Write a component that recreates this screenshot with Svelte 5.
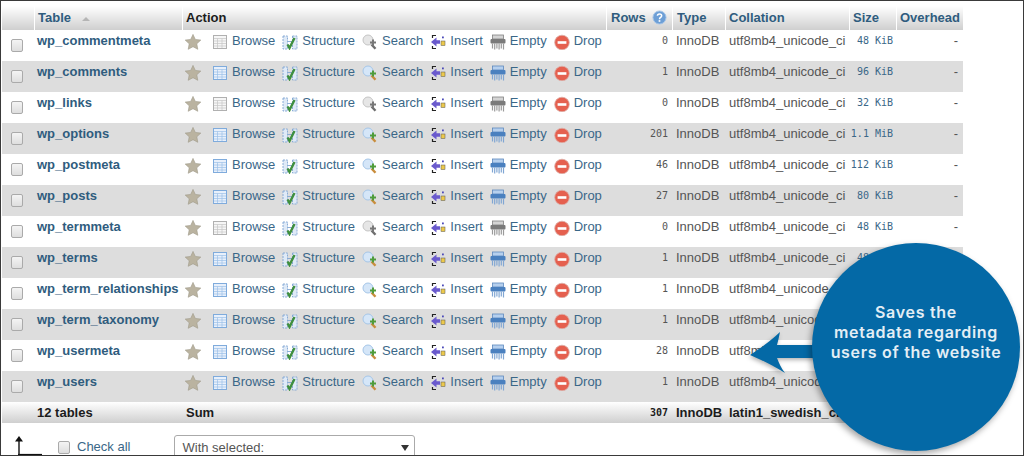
<script>
  const tables = [
    ['wp_commentmeta', 0, '48', 'KiB'],
    ['wp_comments', 1, '96', 'KiB'],
    ['wp_links', 0, '32', 'KiB'],
    ['wp_options', 201, '1.1', 'MiB'],
    ['wp_postmeta', 46, '112', 'KiB'],
    ['wp_posts', 27, '80', 'KiB'],
    ['wp_termmeta', 0, '48', 'KiB'],
    ['wp_terms', 1, '48', 'KiB'],
    ['wp_term_relationships', 1, '48', 'KiB'],
    ['wp_term_taxonomy', 1, '48', 'KiB'],
    ['wp_usermeta', 28, '48', 'KiB'],
    ['wp_users', 1, '48', 'KiB'],
  ];
</script>

{#snippet star()}
  <svg class="ico" viewBox="0 0 16 16">
    <path d="M8 .4l2.3 5 5.5.7-4 3.700 1 5.500L8 12.700l-4.800 2.600 1-5.500-4-3.700 5.500-.7z" fill="#bab3a0" stroke="#a09a8a" stroke-width=".6"></path>
  </svg>
{/snippet}

{#snippet browse(on)}
  <svg class="ico" viewBox="0 0 16 16">
    <rect x="1.500" y="1.500" width="13" height="13" fill={on ? '#e8f0fb' : '#f6f6f6'} stroke={on ? '#7fabdc' : '#b0b0b0'}></rect>
    <path d="M2 4.500h12M2 7h12M2 9.500h12M2 12h12M5.500 4.500V14M10 4.500V14" stroke={on ? '#9cc0e8' : '#c6c6c6'} stroke-width=".7" fill="none"></path>
  </svg>
{/snippet}

{#snippet structure()}
  <svg class="ico" viewBox="0 0 16 16">
    <path d="M1 2h4.500v13H1zM10.500 2H15v13h-4.500z" fill="#dfeaf7" stroke="#7fa5d3" stroke-width=".9" stroke-dasharray="2 1"></path>
    <path d="M6 7.500h4" stroke="#7fa5d3" stroke-width=".9"></path>
    <path d="M5.500 10.500L7.500 14 12.500 4" fill="none" stroke="#3f8f3f" stroke-width="2.400"></path>
  </svg>
{/snippet}

{#snippet search(on)}
  <svg class="ico" viewBox="0 0 16 16">
    <circle cx="6" cy="6" r="5" fill={on ? '#d5e6f8' : '#e6e6e6'} stroke={on ? '#a5c6e8' : '#c4c4c4'}></circle>
    <path d="M9.500 10.500l4 4.300" stroke={on ? '#c98d3c' : '#6e6e6e'} stroke-width="2.400"></path>
    <path d="M11 5.500v6M8 8.500h6" stroke={on ? '#4f9c3a' : '#777'} stroke-width="2"></path>
  </svg>
{/snippet}

{#snippet insert()}
  <svg class="ico" viewBox="0 0 16 16">
    <path d="M6 1.500H2.500v2.500M2.500 12v2.500H6" fill="none" stroke="#222" stroke-width="1.200"></path>
    <path d="M1 8l5.500-4.500v2.700h3.500v3.600H6.500v2.700z" fill="#6a5acd"></path>
    <rect x="11" y="7" width="4" height="4.500" fill="#ecc94b" stroke="#555" stroke-width=".5"></rect>
    <rect x="12" y="2.500" width="1.800" height="1.800" fill="#4a49b8"></rect>
  </svg>
{/snippet}

{#snippet empty(on)}
  <svg class="ico" viewBox="0 0 16 16">
    <rect x="2.500" y="1" width="11" height="4" fill={on ? '#b6d0ee' : '#d4d4d4'} stroke={on ? '#5c88bd' : '#808080'} stroke-width=".8"></rect>
    <rect x=".5" y="5" width="15" height="4.500" rx="1" fill={on ? '#4a80bf' : '#7a7a7a'}></rect>
    <path d="M2.500 9.500v5M4.700 9.500v6M6.900 9.500v5M9.100 9.500v6M11.300 9.500v5M13.500 9.500v6" stroke={on ? '#80a6d3' : '#9a9a9a'} stroke-width="1.200"></path>
  </svg>
{/snippet}

{#snippet drop()}
  <svg class="ico" viewBox="0 0 16 16">
    <circle cx="8" cy="8.500" r="7.300" fill="#e5604f" stroke="#dcb0a9" stroke-width=".8"></circle>
    <rect x="3.600" y="7.200" width="8.800" height="2.600" fill="#fff"></rect>
  </svg>
{/snippet}

<div class="frame">
  <table class="tables">
    <colgroup>
      <col class="c-check" /><col class="c-name" /><col class="c-action" /><col class="c-rows" />
      <col class="c-type" /><col class="c-coll" /><col class="c-size" /><col class="c-over" />
    </colgroup>
    <thead>
      <tr>
        <th></th>
        <th class="blue tight">Table <span class="sort"></span></th>
        <th class="tight">Action</th>
        <th class="blue">
          Rows
          <svg class="help" viewBox="0 0 16 16">
            <circle cx="8" cy="8" r="7" fill="#6d9fd6" stroke="#a9c6e8"></circle>
            <path d="M5.800 6.200C5.800 3.600 10.300 3.600 10.300 6.200 10.300 8 8 7.900 8 9.800" fill="none" stroke="#fff" stroke-width="1.600"></path>
            <rect x="7.100" y="10.800" width="1.800" height="1.800" fill="#fff"></rect>
          </svg>
        </th>
        <th class="blue">Type</th>
        <th class="blue tight">Collation</th>
        <th class="blue tight">Size</th>
        <th class="blue tight">Overhead</th>
      </tr>
    </thead>
    <tbody>
      {#each tables as [name, rows, size, unit]}
        <tr>
          <td><input class="check" type="checkbox" /></td>
          <td class="name">{name}</td>
          <td>
            <div class="actions">
              <span class="fav">{@render star()}</span>
              <span class="act">{@render browse(rows > 0)}Browse</span>
              <span class="act">{@render structure()}Structure</span>
              <span class="act">{@render search(rows > 0)}Search</span>
              <span class="act">{@render insert()}Insert</span>
              <span class="act">{@render empty(rows > 0)}Empty</span>
              <span class="act">{@render drop()}Drop</span>
            </div>
          </td>
          <td class="num">{rows}</td>
          <td>InnoDB</td>
          <td>utf8mb4_unicode_ci</td>
          <td class="num size">{size} {unit}</td>
          <td class="dash">-</td>
        </tr>
      {/each}
    </tbody>
    <tfoot>
      <tr>
        <th></th>
        <th class="tight">12 tables</th>
        <th>Sum</th>
        <th class="num">307</th>
        <th>InnoDB</th>
        <th>latin1_swedish_ci</th>
        <th></th>
        <th></th>
      </tr>
    </tfoot>
  </table>

  <div class="bulk">
    <svg class="corner" viewBox="0 0 28 20">
      <path d="M5 20V5" stroke="#111" stroke-width="1.400" fill="none"></path>
      <path d="M1 6.500L5 1l4 5.500z" fill="#111"></path>
      <path d="M4 19.500h24" stroke="#111" stroke-width="1.200" fill="none"></path>
    </svg>
    <input class="check" type="checkbox" />
    <span class="all">Check all</span>
    <div class="select">
      <span>With selected:</span>
      <span class="caret"></span>
    </div>
  </div>

  <svg class="pointer" viewBox="0 0 70 42">
    <path d="M0 23C12 15 22 8 30 0 29 5 28 9 27 13H70V26H27C29 31 31 36 35 41 24 34 12 28 0 23z" fill="#0469a6"></path>
  </svg>
  <div class="callout">
    <p>Saves the<br />metadata regarding<br />users of the website</p>
  </div>
</div>

<style>
  :global(body) {
    margin: 0;
    background: #fff;
  }

  .frame {
    position: relative;
    box-sizing: border-box;
    width: 1024px;
    height: 456px;
    overflow: hidden;
    border: 1px solid #3a3a3a;
    padding: 5px 0 0 1px;
    font-family: "Liberation Sans", Arial, sans-serif;
    font-size: 13px;
    color: #555;
  }

  .tables {
    table-layout: fixed;
    width: 961px;
    border-collapse: separate;
    border-spacing: 0;
  }

  .c-check { width: 32px; }
  .c-name { width: 148px; }
  .c-action { width: 424px; }
  .c-rows { width: 66px; }
  .c-type { width: 53px; }
  .c-coll { width: 124px; }
  .c-size { width: 47px; }
  .c-over { width: 67px; }

  th {
    box-sizing: border-box;
    height: 24px;
    padding: 0 4px 2px;
    text-align: left;
    font-weight: bold;
    white-space: nowrap;
    color: #1c1c1c;
    background: linear-gradient(#fff, #cfcfcf);
    border-left: 1px solid #fff;
  }

  th:first-child {
    border-left: 0;
  }

  th.blue {
    color: #2f5c7e;
  }

  th.tight {
    padding-left: 3px;
  }

  tfoot th {
    height: 21px;
    padding-bottom: 1px;
    border-left: 0;
    background: linear-gradient(#fff, #cfcfcf);
  }

  td {
    box-sizing: border-box;
    height: 31px;
    padding: 3px 4px 0;
    vertical-align: top;
    white-space: nowrap;
    overflow: hidden;
  }

  tbody tr:nth-child(even) td {
    background: #ddd;
  }

  td .check {
    margin: 6px 0 0 5px;
  }

  .check {
    appearance: none;
    box-sizing: border-box;
    display: block;
    flex: none;
    width: 12px;
    height: 13px;
    margin: 6px 0 0;
    border: 1px solid #aaa;
    border-radius: 2px;
    background: linear-gradient(#f4f4f4, #dedede);
  }

  .name {
    padding-left: 3px;
    font-weight: bold;
    color: #2f5c7e;
  }

  .actions {
    display: flex;
    align-items: flex-start;
    gap: 7px;
    margin-left: -1px;
    color: #3a6788;
  }

  .fav {
    display: block;
    margin-right: 4px;
  }

  .act {
    display: flex;
    align-items: flex-start;
    gap: 4px;
  }

  .ico {
    display: block;
    flex: none;
    width: 16px;
    height: 16px;
    margin-top: 1px;
  }

  .num {
    text-align: right;
    font-family: "DejaVu Sans Mono", monospace;
    font-size: 10px;
    padding-top: 5px;
  }

  .size {
    padding-right: 3px;
    padding-left: 0;
    color: #3a6788;
  }

  .dash {
    text-align: right;
    padding-right: 5px;
  }

  tfoot .num {
    padding-top: 0;
  }

  .sort {
    display: inline-block;
    margin: 0 0 1px 7px;
    border: 4px solid transparent;
    border-top: 0;
    border-bottom: 4px solid #b5b5b5;
  }

  .help {
    width: 15px;
    height: 15px;
    margin-left: 3px;
    vertical-align: -3px;
  }

  .bulk {
    display: flex;
    align-items: flex-start;
    margin-top: 12px;
    padding-left: 12px;
  }

  .corner {
    flex: none;
    width: 28px;
    height: 20px;
    margin-right: 16px;
    margin-top: -0.500px;
  }

  .all {
    margin: 4px 44px 0 7px;
    color: #3a6788;
  }

  .select {
    box-sizing: border-box;
    display: flex;
    justify-content: space-between;
    width: 241px;
    height: 30px;
    padding: 4px 5px 0 7px;
    border: 1px solid #aaa;
    border-radius: 3px;
    color: #555;
  }

  .caret {
    margin-top: 5px;
    width: 0;
    height: 0;
    border: 4px solid transparent;
    border-bottom: 0;
    border-top: 6px solid #333;
  }

  .pointer {
    position: absolute;
    left: 749px;
    top: 331px;
    width: 70px;
    height: 42px;
    filter: drop-shadow(-1px 2px 2px rgba(0, 0, 0, 0.3));
  }

  .callout {
    position: absolute;
    left: 811px;
    top: 242px;
    box-sizing: border-box;
    width: 208px;
    height: 208px;
    padding-bottom: 30px;
    display: flex;
    align-items: center;
    justify-content: center;
    border-radius: 50%;
    background: #0469a6;
    box-shadow: -2px 3px 6px rgba(0, 0, 0, 0.35);
  }

  .callout p {
    margin: 0;
    text-align: center;
    color: #e3eef5;
    font-family: Inter, "Open Sans", sans-serif;
    font-weight: 600;
    font-size: 16px;
    letter-spacing: 0.7px;
    line-height: 20px;
  }
</style>
